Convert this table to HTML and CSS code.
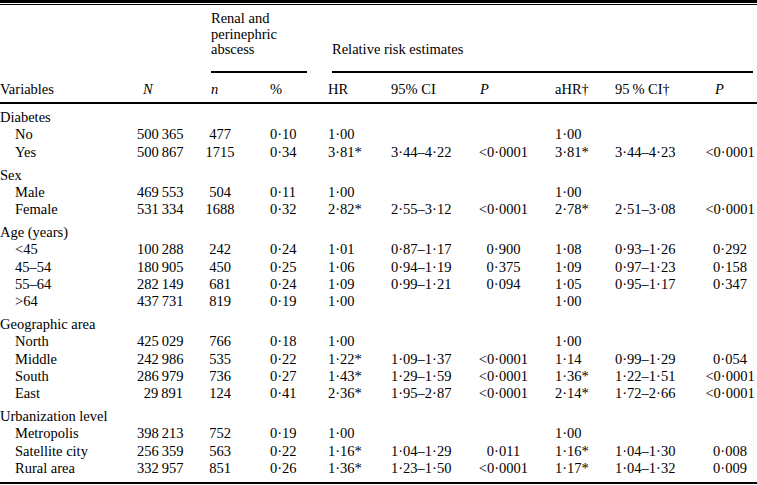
FILE: index.html
```html
<!DOCTYPE html>
<html>
<head>
<meta charset="utf-8">
<link rel="stylesheet" href="styles.css">
</head>
<body>
<div class="rule-top"></div>
<table class="tbl">
<colgroup>
<col class="c1"><col class="c2"><col class="c3"><col class="c4"><col class="c5"><col class="c6"><col class="c7"><col class="c8"><col class="c9"><col class="c10">
</colgroup>
<thead>
<tr class="h1">
<th></th><th></th>
<th colspan="2" class="sp-renal"><div class="uline">Renal and<br>perinephric<br>abscess</div></th>
<th colspan="6" class="sp-rel"><div class="uline">Relative risk estimates</div></th>
</tr>
<tr class="h2">
<th>Variables</th>
<th class="it hN">N</th>
<th class="it hn">n</th>
<th class="pc">%</th>
<th>HR</th>
<th>95% CI</th>
<th class="it hp1">P</th>
<th>aHR†</th>
<th>95&#8201;% CI†</th>
<th class="it hp2">P</th>
</tr>
</thead>
<tbody>
<tr class="grp"><td>Diabetes</td><td></td><td></td><td></td><td></td><td></td><td></td><td></td><td></td><td></td></tr>
<tr><td class="sub">No</td><td class="num">500&#8201;365</td><td class="cn">477</td><td class="pc">0·10</td><td>1·00</td><td></td><td class="p1"></td><td>1·00</td><td></td><td class="p2"></td></tr>
<tr><td class="sub">Yes</td><td class="num">500&#8201;867</td><td class="cn">1715</td><td class="pc">0·34</td><td>3·81*</td><td>3·44–4·22</td><td class="p1">&lt;0·0001</td><td>3·81*</td><td>3·44–4·23</td><td class="p2">&lt;0·0001</td></tr>
<tr class="grp"><td>Sex</td><td></td><td></td><td></td><td></td><td></td><td></td><td></td><td></td><td></td></tr>
<tr><td class="sub">Male</td><td class="num">469&#8201;553</td><td class="cn">504</td><td class="pc">0·11</td><td>1·00</td><td></td><td class="p1"></td><td>1·00</td><td></td><td class="p2"></td></tr>
<tr><td class="sub">Female</td><td class="num">531&#8201;334</td><td class="cn">1688</td><td class="pc">0·32</td><td>2·82*</td><td>2·55–3·12</td><td class="p1">&lt;0·0001</td><td>2·78*</td><td>2·51–3·08</td><td class="p2">&lt;0·0001</td></tr>
<tr class="grp"><td>Age (years)</td><td></td><td></td><td></td><td></td><td></td><td></td><td></td><td></td><td></td></tr>
<tr><td class="sub">&lt;45</td><td class="num">100&#8201;288</td><td class="cn">242</td><td class="pc">0·24</td><td>1·01</td><td>0·87–1·17</td><td class="p1">0·900</td><td>1·08</td><td>0·93–1·26</td><td class="p2">0·292</td></tr>
<tr><td class="sub">45–54</td><td class="num">180&#8201;905</td><td class="cn">450</td><td class="pc">0·25</td><td>1·06</td><td>0·94–1·19</td><td class="p1">0·375</td><td>1·09</td><td>0·97–1·23</td><td class="p2">0·158</td></tr>
<tr><td class="sub">55–64</td><td class="num">282&#8201;149</td><td class="cn">681</td><td class="pc">0·24</td><td>1·09</td><td>0·99–1·21</td><td class="p1">0·094</td><td>1·05</td><td>0·95–1·17</td><td class="p2">0·347</td></tr>
<tr><td class="sub">&gt;64</td><td class="num">437&#8201;731</td><td class="cn">819</td><td class="pc">0·19</td><td>1·00</td><td></td><td class="p1"></td><td>1·00</td><td></td><td class="p2"></td></tr>
<tr class="grp"><td>Geographic area</td><td></td><td></td><td></td><td></td><td></td><td></td><td></td><td></td><td></td></tr>
<tr><td class="sub">North</td><td class="num">425&#8201;029</td><td class="cn">766</td><td class="pc">0·18</td><td>1·00</td><td></td><td class="p1"></td><td>1·00</td><td></td><td class="p2"></td></tr>
<tr><td class="sub">Middle</td><td class="num">242&#8201;986</td><td class="cn">535</td><td class="pc">0·22</td><td>1·22*</td><td>1·09–1·37</td><td class="p1">&lt;0·0001</td><td>1·14</td><td>0·99–1·29</td><td class="p2">0·054</td></tr>
<tr><td class="sub">South</td><td class="num">286&#8201;979</td><td class="cn">736</td><td class="pc">0·27</td><td>1·43*</td><td>1·29–1·59</td><td class="p1">&lt;0·0001</td><td>1·36*</td><td>1·22–1·51</td><td class="p2">&lt;0·0001</td></tr>
<tr><td class="sub">East</td><td class="num">29&#8201;891</td><td class="cn">124</td><td class="pc">0·41</td><td>2·36*</td><td>1·95–2·87</td><td class="p1">&lt;0·0001</td><td>2·14*</td><td>1·72–2·66</td><td class="p2">&lt;0·0001</td></tr>
<tr class="grp"><td>Urbanization level</td><td></td><td></td><td></td><td></td><td></td><td></td><td></td><td></td><td></td></tr>
<tr><td class="sub">Metropolis</td><td class="num">398&#8201;213</td><td class="cn">752</td><td class="pc">0·19</td><td>1·00</td><td></td><td class="p1"></td><td>1·00</td><td></td><td class="p2"></td></tr>
<tr><td class="sub">Satellite city</td><td class="num">256&#8201;359</td><td class="cn">563</td><td class="pc">0·22</td><td>1·16*</td><td>1·04–1·29</td><td class="p1">0·011</td><td>1·16*</td><td>1·04–1·30</td><td class="p2">0·008</td></tr>
<tr class="last"><td class="sub">Rural area</td><td class="num">332&#8201;957</td><td class="cn">851</td><td class="pc">0·26</td><td>1·36*</td><td>1·23–1·50</td><td class="p1">&lt;0·0001</td><td>1·17*</td><td>1·04–1·32</td><td class="p2">0·009</td></tr>
</tbody>
</table>
</body>
</html>
```
FILE: styles.css
```css
body {
  margin: 0;
  background: #fff;
  color: #000;
  font-family: "Liberation Serif", "Times New Roman", serif;
  font-size: 14.5px;
}

.rule-top {
  height: 1px;
  border-top: 3px solid #000;
  border-bottom: 1px solid #000;
}

.tbl {
  width: 757px;
  table-layout: fixed;
  border-collapse: separate;
  border-spacing: 0;
}

.c1 { width: 137px; }
.c2 { width: 68px; }
.c3 { width: 30px; }
.c4 { width: 93px; }
.c5 { width: 63px; }
.c6 { width: 86px; }
.c7 { width: 78px; }
.c8 { width: 60px; }
.c9 { width: 88px; }
.c10 { width: 54px; }

.tbl th,
.tbl td {
  padding: 0;
  font-weight: normal;
  text-align: left;
  white-space: nowrap;
  line-height: 17.3px;
  vertical-align: bottom;
}

.tbl .h1 th {
  padding-top: 6px;
  line-height: 15.5px;
}

.uline {
  border-bottom: 2px solid #000;
  padding-bottom: 13.5px;
}

.tbl .sp-renal { padding-left: 6px; padding-right: 21px; }
.tbl .sp-rel { padding-left: 4px; padding-right: 4px; }

.tbl .h2 th {
  padding-top: 8px;
  padding-bottom: 3.4px;
  border-bottom: 2px solid #000;
}

.it { font-style: italic; }
.tbl .hN { padding-left: 6px; }
.tbl .hn { padding-left: 6px; }
.tbl .pc { padding-left: 35px; }
.tbl .hp1 { padding-left: 3px; }
.tbl .hp2 { padding-left: 12px; }

.tbl .grp td { padding-top: 5.5px; }

.tbl .sub { padding-left: 15px; }
.tbl .num { text-align: right; padding-right: 22px; }
.tbl .cn { text-align: center; }
.tbl .p1 { text-align: center; padding-right: 25px; }
.tbl .p2 { text-align: center; }

.tbl .last td {
  padding-bottom: 4.5px;
  border-bottom: 2px solid #000;
}
```
